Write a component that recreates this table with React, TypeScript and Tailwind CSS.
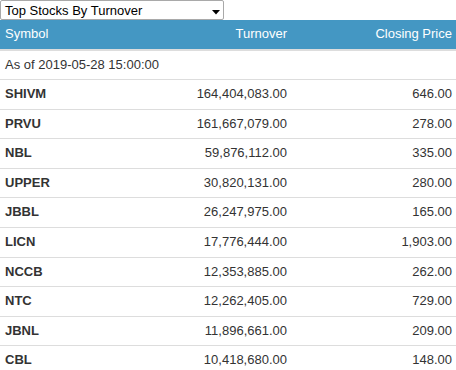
const rows = [
  ['SHIVM', '164,404,083.00', '646.00'],
  ['PRVU', '161,667,079.00', '278.00'],
  ['NBL', '59,876,112.00', '335.00'],
  ['UPPER', '30,820,131.00', '280.00'],
  ['JBBL', '26,247,975.00', '165.00'],
  ['LICN', '17,776,444.00', '1,903.00'],
  ['NCCB', '12,353,885.00', '262.00'],
  ['NTC', '12,262,405.00', '729.00'],
  ['JBNL', '11,896,661.00', '209.00'],
  ['CBL', '10,418,680.00', '148.00'],
]

export default function App() {
  return (
    <div className="w-[456px] h-[370px] overflow-hidden bg-white text-[13px] leading-[1.42857] text-[#333] font-['Liberation_Sans',Arial,sans-serif]">
      <div className="relative w-[224px] h-[20px] border border-[#a9a9a9] rounded-[2px] bg-white flex items-center pl-[4px] text-black leading-none">
        Top Stocks By Turnover
        <svg className="absolute left-[211px] top-[9px]" width="8" height="5" viewBox="0 0 8 5">
          <path d="M0 0 H8 L4 4.5 Z" fill="#000" />
        </svg>
      </div>
      <div className="grid grid-cols-[160px_132px_164px] bg-[#4497c3] text-white border-b-2 border-[#ddd]">
        <div className="px-[5px] py-[5px]">Symbol</div>
        <div className="px-[5px] py-[5px] text-right">Turnover</div>
        <div className="px-[4px] py-[5px] text-right">Closing Price</div>
      </div>
      <div className="px-[5px] py-[5px]">As of 2019-05-28 15:00:00</div>
      {rows.map(([sym, turnover, price]) => (
        <div key={sym} className="grid grid-cols-[160px_132px_164px] border-t border-[#ddd]">
          <div className="px-[5px] py-[5px] font-bold">{sym}</div>
          <div className="px-[5px] py-[5px] text-right">{turnover}</div>
          <div className="px-[4px] py-[5px] text-right">{price}</div>
        </div>
      ))}
    </div>
  )
}
